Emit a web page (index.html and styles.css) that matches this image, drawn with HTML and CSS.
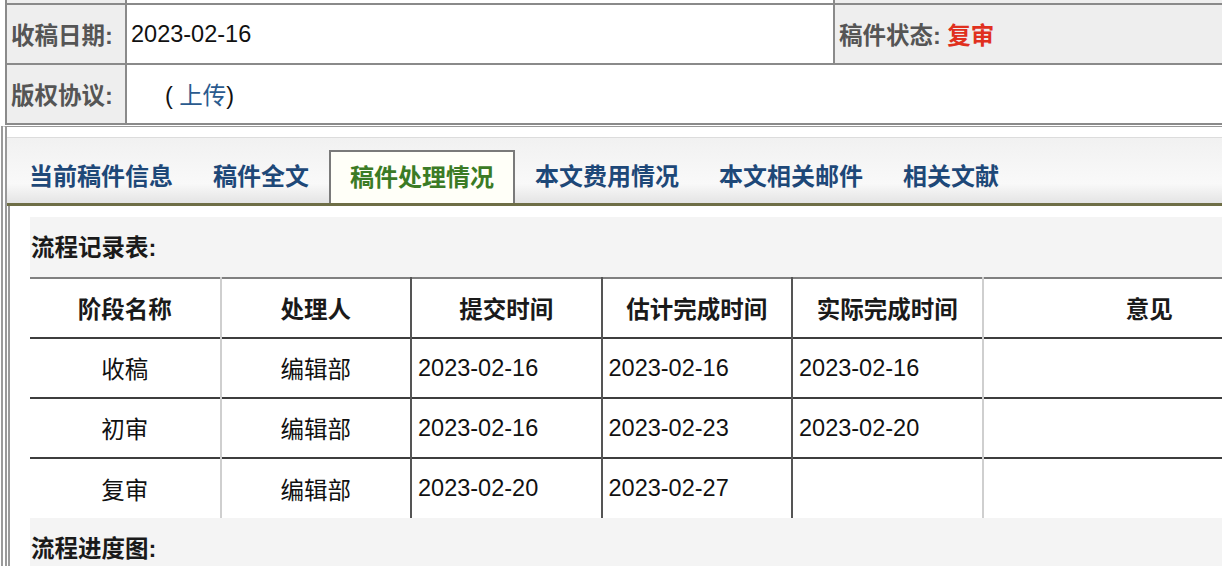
FILE: index.html
```
<!DOCTYPE html>
<html lang="zh-CN">
<head>
    <meta charset="UTF-8">
    <title>稿件处理情况</title>
    <link rel="stylesheet" href="styles.css">
</head>
<body>
    <div class="page">
        <table class="info">
            <colgroup>
                <col class="c-label">
                <col class="c-value">
                <col class="c-status">
            </colgroup>
            <tr class="cut-row">
                <td class="label"></td>
                <td></td>
                <td class="label"></td>
            </tr>
            <tr>
                <td class="label">收稿日期:</td>
                <td class="value">2023-02-16</td>
                <td class="label status">稿件状态: <span class="state">复审</span></td>
            </tr>
            <tr>
                <td class="label">版权协议:</td>
                <td class="value" colspan="2"><span class="upload">( <a href="#">上传</a>)</span></td>
            </tr>
        </table>

        <div class="detail">
            <div class="tabs">
                <a class="tab" href="#">当前稿件信息</a>
                <a class="tab" href="#">稿件全文</a>
                <a class="tab active" href="#">稿件处理情况</a>
                <a class="tab" href="#">本文费用情况</a>
                <a class="tab" href="#">本文相关邮件</a>
                <a class="tab" href="#">相关文献</a>
            </div>

            <div class="tab-body">
                <div class="panel">
                    <h3>流程记录表:</h3>
                    <table class="flow">
                        <colgroup>
                            <col class="c-col">
                            <col class="c-col">
                            <col class="c-col">
                            <col class="c-col">
                            <col class="c-col">
                            <col class="c-wide">
                        </colgroup>
                        <tr>
                            <th class="soft">阶段名称</th>
                            <th>处理人</th>
                            <th>提交时间</th>
                            <th>估计完成时间</th>
                            <th class="soft">实际完成时间</th>
                            <th>意见</th>
                        </tr>
                        <tr>
                            <td class="center soft">收稿</td>
                            <td class="center">编辑部</td>
                            <td>2023-02-16</td>
                            <td>2023-02-16</td>
                            <td class="soft">2023-02-16</td>
                            <td></td>
                        </tr>
                        <tr>
                            <td class="center soft">初审</td>
                            <td class="center">编辑部</td>
                            <td>2023-02-16</td>
                            <td>2023-02-23</td>
                            <td class="soft">2023-02-20</td>
                            <td></td>
                        </tr>
                        <tr>
                            <td class="center soft">复审</td>
                            <td class="center">编辑部</td>
                            <td>2023-02-20</td>
                            <td>2023-02-27</td>
                            <td class="soft"></td>
                            <td></td>
                        </tr>
                    </table>
                    <h3>流程进度图:</h3>
                </div>
            </div>
        </div>
    </div>
</body>
</html>
```

FILE: styles.css
```
* {
    box-sizing: border-box;
}

body {
    margin: 0;
    overflow: hidden;
    background: white;
    font-family: "Liberation Sans", "Noto Sans CJK SC", sans-serif;
    font-size: 23.5px;
    color: #111;
}

.page {
    width: 1300px;
    padding-left: 5px;
}

/* 稿件基本信息 */
.info {
    border-collapse: collapse;
    table-layout: fixed;
    width: 1260px;
}

.c-label { width: 120px; }
.c-value { width: 708px; }
.c-status { width: 432px; }

.info td {
    border: 2px solid #8a8a8a;
    height: 60px;
    padding: 0 4px;
    white-space: nowrap;
}

.info tr:first-child td {
    border-top: none;
}

.info .cut-row td {
    height: 4px;
    padding: 0;
}

.info .label {
    background: #eeeeee;
    color: #555;
    font-weight: bold;
}

.info .status {
    border-right: none;
}

.state {
    color: #e0301e;
}

.upload {
    padding-left: 34px;
}

.upload a {
    color: #2a5a8e;
    text-decoration: none;
}

/* 标签页 */
.detail {
    margin-left: -4px;
    margin-top: 1px;
    border-top: 1px solid #999;
    border-left: 6px double #9a9a9a;
    padding-top: 10px;
}

.tabs {
    display: flex;
    align-items: flex-end;
    height: 69px;
    padding-left: 2px;
    border-top: 1px solid #dcdcdc;
    border-bottom: 3px solid #6e6e46;
    background: linear-gradient(#f1f1f1, #f9f9f9 70%, #e4e4e4);
}

.tab {
    display: block;
    height: 53px;
    line-height: 53px;
    padding: 0 20px;
    font-size: 24px;
    color: #1e4878;
    font-weight: bold;
    text-decoration: none;
    white-space: nowrap;
}

.tab.active {
    line-height: 51px;
    padding: 0 19px;
    border: 2px solid #7a7a7a;
    border-bottom: none;
    background: #fffff8;
    color: #3b7b25;
}

.tab-body {
    margin-left: 1px;
    border-left: 2px solid #9a9a9a;
    padding: 11px 0 0 20px;
}

.panel {
    background: #f4f4f4;
    width: 1290px;
}

.panel h3 {
    margin: 0;
    height: 60px;
    line-height: 62px;
    font-size: 23.5px;
    padding-left: 1px;
    color: #1a1a1a;
}

/* 流程记录表 */
.flow {
    border-collapse: collapse;
    table-layout: fixed;
    width: 1286px;
    background: white;
}

.c-col { width: 190.5px; }
.c-wide { width: 333.5px; }

.flow th,
.flow td {
    height: 60px;
    padding: 0 6px;
    border-top: 2px solid #3d3d3d;
    border-right: 2px solid #555;
    white-space: nowrap;
}

.flow tr:first-child th {
    border-top: 2px solid #808080;
}

.flow th {
    font-weight: bold;
    text-align: center;
    color: #1a1a1a;
}

.flow td {
    font-weight: normal;
    text-align: left;
}

.flow .soft {
    border-right-color: #cfcfcf;
}

.flow .center {
    text-align: center;
}
```
